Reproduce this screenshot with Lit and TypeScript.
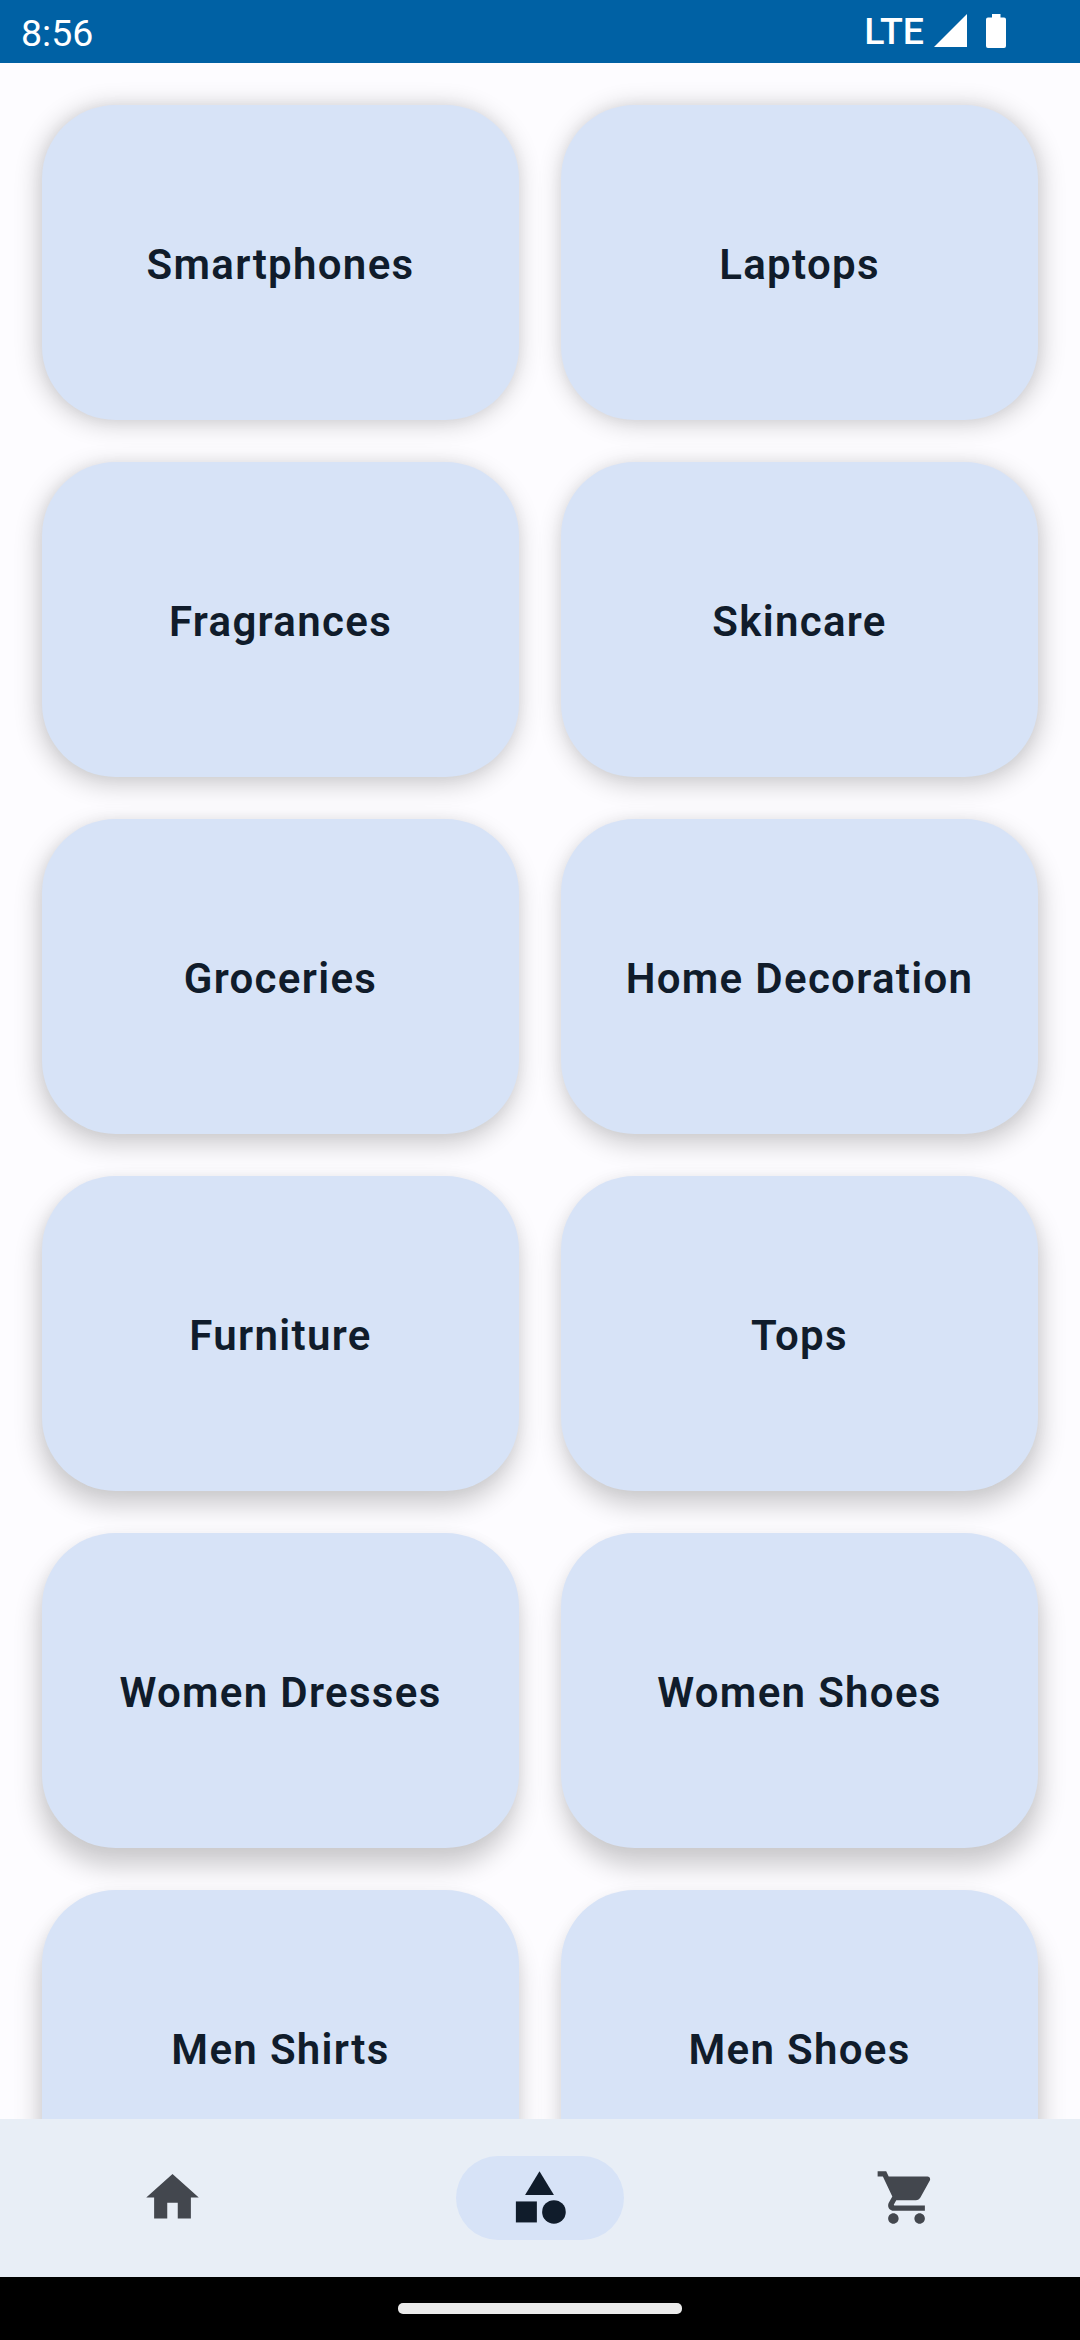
import { LitElement, html, css, svg } from "lit";
import { customElement, property } from "lit/decorators.js";
import { classMap } from "lit/directives/class-map.js";
import { styleMap } from "lit/directives/style-map.js";

const CATEGORIES = [
  "Smartphones",
  "Laptops",
  "Fragrances",
  "Skincare",
  "Groceries",
  "Home Decoration",
  "Furniture",
  "Tops",
  "Women Dresses",
  "Women Shoes",
  "Men Shirts",
  "Men Shoes",
];

// The light sits above the top centre of the screen, so a card's shadow
// shifts further away from it the lower the card is placed.
const LIGHT_FACTOR = 0.0101;

@customElement("status-bar")
class StatusBar extends LitElement {
  static styles = css`
    :host {
      display: flex;
      justify-content: space-between;
      height: 63px;
      box-sizing: border-box;
      padding: 0 74px 0 21px;
      background: #0061a4;
      color: #fff;
      font: 400 37.5px/43px Roboto, sans-serif;
    }
    .clock {
      padding-top: 12px;
    }
    .indicators {
      display: flex;
      align-items: flex-start;
    }
    .network {
      padding-top: 10px;
      margin-right: 10px;
      font-weight: 480;
    }
    .signal {
      width: 33px;
      height: 33px;
      margin: 14px 19px 0 0;
      fill: #fff;
    }
    .battery {
      width: 20px;
      height: 34px;
      margin-top: 14px;
      fill: #fff;
    }
  `;

  render() {
    return html`
      <span class="clock">8:56</span>
      <div class="indicators">
        <span class="network">LTE</span>
        <svg class="signal" viewBox="0 0 33 33"><path d="M0 33H33V0Z" /></svg>
        <svg class="battery" viewBox="0 0 20 34">
          <path d="M6 0h8.5v3.4H18a2 2 0 0 1 2 2V32a2 2 0 0 1-2 2H2a2 2 0 0 1-2-2V5.4a2 2 0 0 1 2-2h4z" />
        </svg>
      </div>
    `;
  }
}

@customElement("category-card")
class CategoryCard extends LitElement {
  @property() label = "";
  @property({ type: Number }) index = 0;

  static styles = css`
    :host {
      display: block;
    }
    .card {
      display: flex;
      align-items: center;
      justify-content: center;
      height: 315px;
      box-sizing: border-box;
      padding-top: 4px;
      border-radius: 73.5px;
      background: #d7e3f7;
      color: #101c2b;
      font: 620 42px/63px Roboto, sans-serif;
      letter-spacing: 1.32px;
      white-space: nowrap;
    }
  `;

  render() {
    const dx = (this.index % 2 ? 259.5 : -259.5) * LIGHT_FACTOR;
    const dy = (262.5 + Math.floor(this.index / 2) * 357) * LIGHT_FACTOR;
    const shadow = `${dx.toFixed(1)}px ${dy.toFixed(1)}px 25px 1px rgba(0,0,0,.19), 0 0 14px rgba(0,0,0,.04)`;
    return html`<div class="card" style=${styleMap({ boxShadow: shadow })}>${this.label}</div>`;
  }
}

const ICONS = {
  home: svg`<path d="M10 20v-6h4v6h5v-8h3L12 3 2 12h3v8z" />`,
  category: svg`<path d="M12 2l-5.5 9h11z" /><circle cx="17.5" cy="17.5" r="4.5" /><path d="M3 13.5h8v8H3z" />`,
  cart: svg`<path d="M7 18c-1.1 0-1.99.9-1.99 2S5.9 22 7 22s2-.9 2-2-.9-2-2-2zM1 2v2h2l3.6 7.59-1.35 2.45c-.16.28-.25.61-.25.96 0 1.1.9 2 2 2h12v-2H7.420c-.14 0-.25-.11-.25-.25l.03-.12.9-1.63h7.45c.75 0 1.41-.41 1.75-1.03l3.58-6.49c.08-.14.12-.31.12-.48 0-.55-.45-1-1-1H5.210l-.94-2H1zm16 16c-1.1 0-1.99.9-1.99 2s.89 2 1.99 2 2-.9 2-2-.9-2-2-2z" />`,
};

@customElement("bottom-nav")
class BottomNav extends LitElement {
  @property() active = "category";

  static styles = css`
    :host {
      display: grid;
      grid-template-columns: repeat(3, 1fr);
      column-gap: 21px;
      height: 158px;
      background: #e8eef6;
    }
    .item {
      display: flex;
      align-items: center;
      justify-content: center;
      color: #43474e;
    }
    .pill {
      display: flex;
      align-items: center;
      justify-content: center;
      width: 168px;
      height: 84px;
      border-radius: 42px;
    }
    .active .pill {
      background: #d7e3f7;
      color: #101c2b;
    }
    .icon {
      width: 63px;
      height: 63px;
      fill: currentColor;
      margin: 0 0.5px 0.5px 0;
    }
  `;

  render() {
    return Object.entries(ICONS).map(
      ([name, icon]) => html`
        <div class=${classMap({ item: true, active: name === this.active })}>
          <div class="pill"><svg class="icon" viewBox="0 0 24 24">${icon}</svg></div>
        </div>
      `
    );
  }
}

@customElement("app-root")
class AppRoot extends LitElement {
  static styles = css`
    :host {
      display: flex;
      flex-direction: column;
      width: 1080px;
      height: 2340px;
      overflow: hidden;
      background: #fdfcff;
    }
    .content {
      flex: 1;
      min-height: 0;
      overflow: hidden;
    }
    .grid {
      display: grid;
      grid-template-columns: 1fr 1fr;
      gap: 42px;
      padding: 42px;
    }
    .gesture {
      display: flex;
      justify-content: center;
      align-items: center;
      height: 63px;
      background: #000;
    }
    .handle {
      width: 284px;
      height: 10.5px;
      border-radius: 5px;
      background: #ebebeb;
    }
  `;

  render() {
    return html`
      <status-bar></status-bar>
      <main class="content">
        <div class="grid">
          ${CATEGORIES.map((c, i) => html`<category-card .label=${c} .index=${i}></category-card>`)}
        </div>
      </main>
      <bottom-nav></bottom-nav>
      <div class="gesture"><div class="handle"></div></div>
    `;
  }
}
